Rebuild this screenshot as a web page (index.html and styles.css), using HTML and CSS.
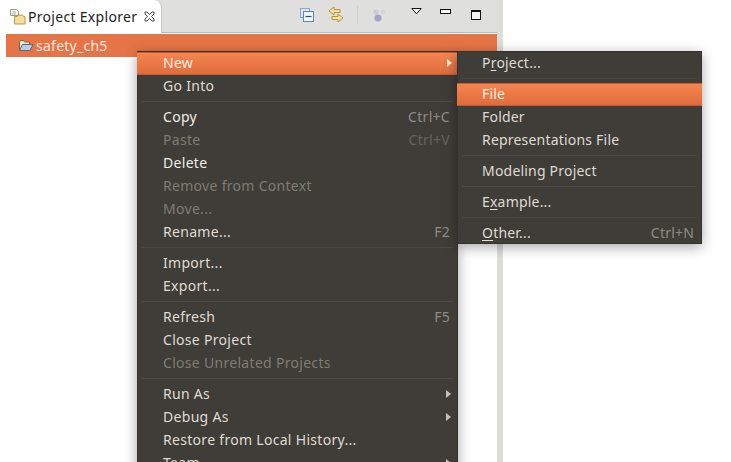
FILE: index.html

```html
<!DOCTYPE html>
<html lang="en">
<head>
    <meta charset="UTF-8" />
    <title>Project Explorer</title>
    <link rel="stylesheet" href="styles.css">
</head>
<body>
    <div class="panel">
        <div class="tabbar">
            <div class="tab">
                <svg class="tab-icon" width="18" height="18" viewBox="0 0 18 18">
                    <path d="M1.500 1.500h6l2 2v4h-8z" fill="#f4f4f0" stroke="#9a9a92"/>
                    <path d="M3 4h4M3 6h4" stroke="#b5b5ad"/>
                    <path d="M5.500 8.500h3l1-1.500h4l1 1.500h1.500v7.500h-10.500z" fill="#f6dd9a" stroke="#b59a50"/>
                </svg>
                <span class="tab-title">Project Explorer</span>
                <svg class="tab-close" width="11" height="11" viewBox="0 0 11 11">
                    <path d="M1 1h2l2.500 2.500L8 1h2v2L7.500 5.500 10 8v2H8L5.500 7.500 3 10H1V8l2.500-2.500L1 3z" fill="#fff" stroke="#333" stroke-width="0.9"/>
                </svg>
            </div>
            <div class="tools">
                <svg class="tool collapse" width="14" height="14" viewBox="0 0 14 14">
                    <rect x="0.500" y="0.500" width="9" height="9" fill="#dfe8f2" stroke="#8aa6c4"/>
                    <rect x="3.500" y="3.500" width="10" height="10" fill="#eef4f9" stroke="#5f86ad"/>
                    <path d="M5.500 8.500h6" stroke="#2f4f6f" stroke-width="1.200"/>
                </svg>
                <svg class="tool sync" width="16" height="17" viewBox="0 0 16 17">
                    <path d="M6 1L1 5l5 4V6.500h6V3.500H6z" fill="#f6e3a6" stroke="#b8923c"/>
                    <path d="M10 8l5 4-5 4v-2.500H4v-3h6z" fill="#f6e3a6" stroke="#b8923c"/>
                </svg>
                <span class="tool-sep"></span>
                <svg class="tool filter" width="14" height="14" viewBox="0 0 14 14">
                    <circle cx="4" cy="4" r="2.500" fill="#c9c9d2"/>
                    <circle cx="11" cy="4" r="2.500" fill="#d4d4da"/>
                    <circle cx="6" cy="10" r="3.500" fill="#a3a3c4"/>
                </svg>
                <svg class="tool view-menu" width="11" height="7" viewBox="0 0 11 7">
                    <path d="M0.800 0.500h9.400L5.500 5.800z" fill="#f5f5f5" stroke="#111"/>
                </svg>
                <span class="tool minimize"></span>
                <span class="tool maximize"></span>
            </div>
        </div>
        <div class="tree">
            <div class="tree-row">
                <svg width="16" height="13" viewBox="0 0 16 13">
                    <path d="M1.500 11V3l1-1.500h3l1 1.500h5v2" fill="#f3e6c0" stroke="#6d6a5c"/>
                    <path d="M1.500 11.500L4.500 5.500h10.500l-3 6z" fill="#b7cdea" stroke="#54688a"/>
                </svg>
                <span>safety_ch5</span>
            </div>
        </div>
    </div>

    <div class="menu main-menu">
        <div class="item active"><span>New</span><i class="arrow"></i></div>
        <div class="item"><span>Go Into</span></div>
        <div class="sep"></div>
        <div class="item bright"><span>Copy</span><em>Ctrl+C</em></div>
        <div class="item off"><span>Paste</span><em>Ctrl+V</em></div>
        <div class="item bright"><span>Delete</span></div>
        <div class="item off"><span>Remove from Context</span></div>
        <div class="item off"><span>Move...</span></div>
        <div class="item"><span>Rename...</span><em>F2</em></div>
        <div class="sep"></div>
        <div class="item"><span>Import...</span></div>
        <div class="item"><span>Export...</span></div>
        <div class="sep"></div>
        <div class="item"><span>Refresh</span><em>F5</em></div>
        <div class="item"><span>Close Project</span></div>
        <div class="item off"><span>Close Unrelated Projects</span></div>
        <div class="sep"></div>
        <div class="item"><span>Run As</span><i class="arrow"></i></div>
        <div class="item"><span>Debug As</span><i class="arrow"></i></div>
        <div class="item"><span>Restore from Local History...</span></div>
        <div class="item"><span>Team</span><i class="arrow"></i></div>
    </div>

    <div class="menu sub-menu">
        <div class="item"><span>P<u>r</u>oject...</span></div>
        <div class="sep"></div>
        <div class="item active"><span>File</span></div>
        <div class="item"><span>Folder</span></div>
        <div class="item"><span>Representations File</span></div>
        <div class="sep"></div>
        <div class="item"><span>Modeling Project</span></div>
        <div class="sep"></div>
        <div class="item"><span>E<u>x</u>ample...</span></div>
        <div class="sep"></div>
        <div class="item"><span><u>O</u>ther...</span><em>Ctrl+N</em></div>
    </div>
</body>
</html>
```

FILE: styles.css

```css
html, body {
    margin: 0;
    padding: 0;
    height: 462px;
    overflow: hidden;
    background: #ffffff;
    font-family: "Noto Sans", "Open Sans", sans-serif;
}
.panel {
    width: 497px;
    height: 462px;
    border-right: 6px solid #dcdcda;
    background: #ffffff;
}
.tabbar {
    display: flex;
    justify-content: space-between;
    height: 32px;
    background: #dfdfdd;
    border-bottom: 1px solid #b9b9b7;
}
.tab {
    display: flex;
    align-items: center;
    width: 162px;
    height: 33px;
    box-sizing: border-box;
    padding-left: 9px;
    background: #ffffff;
    border-right: 1px solid #c4c4c2;
    border-radius: 0 8px 0 0;
}
.tab-title {
    margin-left: 1px;
    font-size: 14px;
    letter-spacing: 0.3px;
    color: #1e1e1e;
    white-space: nowrap;
}
.tab-close {
    margin-left: 7px;
}
.tools {
    display: flex;
    align-items: center;
    padding: 0 16px 3px 0;
}
.tool {
    display: block;
    flex: none;
}
.collapse {
    margin-right: 14px;
}
.sync {
    margin-right: 13px;
}
.tool-sep {
    width: 1px;
    height: 18px;
    background: #cfcfcd;
    margin-right: 14px;
}
.filter {
    margin-right: 25px;
}
.view-menu {
    margin-right: 18px;
    margin-bottom: 7px;
}
.minimize {
    width: 9px;
    height: 3px;
    border: 1px solid #111;
    background: #f5f5f5;
    margin-right: 20px;
    margin-bottom: 6px;
}
.maximize {
    width: 8px;
    height: 7px;
    border: 1px solid #111;
    border-top-width: 2px;
    background: #f5f5f5;
}
.tree {
    padding: 1px 0 0 6px;
}
.tree-row {
    display: flex;
    align-items: center;
    gap: 2px;
    height: 23px;
    padding-left: 12px;
    background: #e57446;
    color: #f6e8e0;
    font-size: 14px;
    letter-spacing: 0.25px;
}
.menu {
    position: absolute;
    box-sizing: border-box;
    background: #3f3d37;
    color: #dfdbd2;
    font-size: 14px;
    letter-spacing: 0.3px;
    border: 1px solid #34322d;
    box-shadow: 0 3px 12px rgba(0,0,0,0.35);
}
.main-menu {
    left: 137px;
    top: 51px;
    width: 321px;
}
.sub-menu {
    left: 457px;
    top: 51px;
    width: 245px;
    height: 193px;
    letter-spacing: 0.2px;
}
.item {
    position: relative;
    display: flex;
    align-items: center;
    box-sizing: border-box;
    height: 23px;
    padding: 0 8px 2px 25px;
    white-space: nowrap;
}
.sub-menu .item {
    padding-left: 24px;
}
.item u {
    text-underline-offset: 2px;
}
.item em {
    position: absolute;
    right: 7px;
    font-style: normal;
    color: #8f8c84;
}
.item.bright {
    color: #f0ede6;
}
.item.off {
    color: #7f7c74;
}
.item.off em {
    color: #66635c;
}
.item.active,
.sub-menu .item.active {
    margin: 0 -1px;
    background: linear-gradient(#f58550, #e06c3c);
    border-top: 1px solid #c9592e;
    border-bottom: 1px solid #c9592e;
    color: #fbeee6;
}
.main-menu .item.active {
    padding-left: 26px;
}
.sub-menu .item.active {
    padding-left: 25px;
}
.arrow {
    position: absolute;
    right: 6px;
    width: 0;
    height: 0;
    border-left: 5px solid #c4c1b9;
    border-top: 4px solid transparent;
    border-bottom: 4px solid transparent;
}
.item.active .arrow {
    border-left-color: #fbeee6;
}
.sep {
    height: 1px;
    margin: 3px 4px 4px;
    background: #4a4842;
}
```
